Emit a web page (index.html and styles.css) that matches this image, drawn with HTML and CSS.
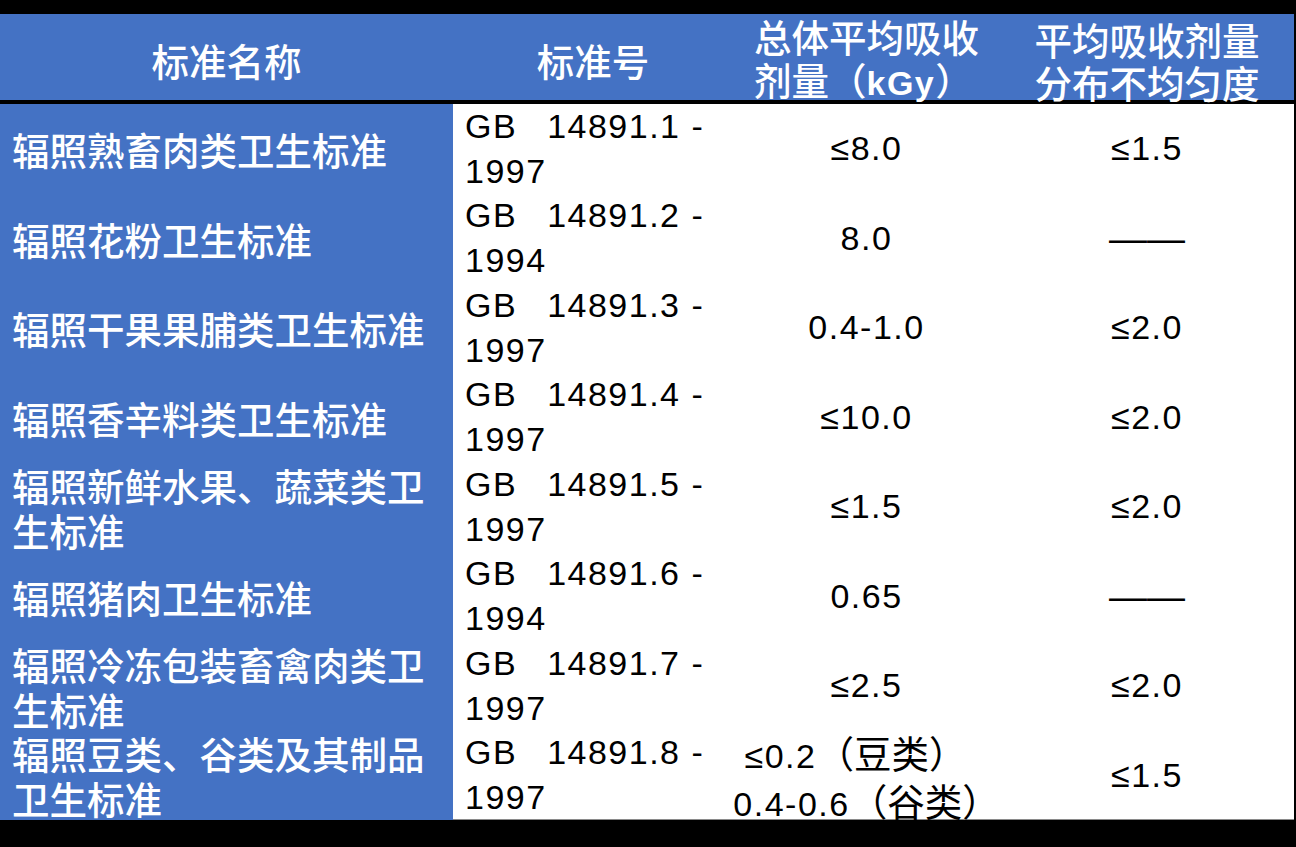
FILE: index.html
```html
<!DOCTYPE html>
<html lang="zh-CN">
<head>
<meta charset="utf-8">
<title>辐照食品卫生标准</title>
<link rel="stylesheet" href="styles.css">
</head>
<body>
<div class="sheet">
  <div class="grid head">
    <div class="cell hc center"><div>标准名称</div></div>
    <div class="cell hc center"><div>标准号</div></div>
    <div class="cell hc center"><div class="left">总体平均吸收<br>剂量（<span class="lat">kGy</span>）</div></div>
    <div class="cell hc center"><div class="left">平均吸收剂量<br>分布不均匀度</div></div>
  </div>
  <div class="grid body">
    <div class="cell name">辐照熟畜肉类卫生标准</div>
    <div class="cell code"><span class="lat">GB<span class="gap"></span>14891.1 -<br>1997</span></div>
    <div class="cell center"><span class="lat">≤8.0</span></div>
    <div class="cell center"><span class="lat">≤1.5</span></div>

    <div class="cell name">辐照花粉卫生标准</div>
    <div class="cell code"><span class="lat">GB<span class="gap"></span>14891.2 -<br>1994</span></div>
    <div class="cell center"><span class="lat">8.0</span></div>
    <div class="cell center"><span class="dash">——</span></div>

    <div class="cell name">辐照干果果脯类卫生标准</div>
    <div class="cell code"><span class="lat">GB<span class="gap"></span>14891.3 -<br>1997</span></div>
    <div class="cell center"><span class="lat">0.4-1.0</span></div>
    <div class="cell center"><span class="lat">≤2.0</span></div>

    <div class="cell name">辐照香辛料类卫生标准</div>
    <div class="cell code"><span class="lat">GB<span class="gap"></span>14891.4 -<br>1997</span></div>
    <div class="cell center"><span class="lat">≤10.0</span></div>
    <div class="cell center"><span class="lat">≤2.0</span></div>

    <div class="cell name">辐照新鲜水果、蔬菜类卫生标准</div>
    <div class="cell code"><span class="lat">GB<span class="gap"></span>14891.5 -<br>1997</span></div>
    <div class="cell center"><span class="lat">≤1.5</span></div>
    <div class="cell center"><span class="lat">≤2.0</span></div>

    <div class="cell name">辐照猪肉卫生标准</div>
    <div class="cell code"><span class="lat">GB<span class="gap"></span>14891.6 -<br>1994</span></div>
    <div class="cell center"><span class="lat">0.65</span></div>
    <div class="cell center"><span class="dash">——</span></div>

    <div class="cell name">辐照冷冻包装畜禽肉类卫生标准</div>
    <div class="cell code"><span class="lat">GB<span class="gap"></span>14891.7 -<br>1997</span></div>
    <div class="cell center"><span class="lat">≤2.5</span></div>
    <div class="cell center"><span class="lat">≤2.0</span></div>

    <div class="cell name">辐照豆类、谷类及其制品卫生标准</div>
    <div class="cell code"><span class="lat">GB<span class="gap"></span>14891.8 -<br>1997</span></div>
    <div class="cell center"><div class="mixed"><span class="lat">≤0.2</span>（豆类）<span class="tail"></span><br><span class="lat">0.4-0.6</span>（谷类）</div></div>
    <div class="cell center"><span class="lat">≤1.5</span></div>
  </div>
</div>
</body>
</html>
```

FILE: styles.css
```css
html, body {
  margin: 0;
  padding: 0;
  background: #000;
}

body {
  width: 1296px;
  height: 847px;
  overflow: hidden;
  font-family: "Noto Sans CJK SC", "Liberation Sans", sans-serif;
  font-size: 37.5px;
}

.sheet {
  padding-top: 14px;
  width: 1294px;
}

.grid {
  display: grid;
  grid-template-columns: 453px 280px 267px 294px;
}

.head {
  height: 86px;
  background: #4472c4;
  color: #fff;
  font-weight: 500;
  line-height: 43px;
  margin-bottom: 4px;
}

.body {
  grid-auto-rows: 89.5px;
  background: #fff;
  color: #000;
  line-height: 45px;
  border-bottom: 1px solid #8a8a8a;
  height: 716px;
  box-sizing: border-box;
}

.cell {
  display: flex;
  align-items: center;
  overflow: visible;
}

.center {
  justify-content: center;
  text-align: center;
}

.left {
  text-align: left;
}

.name {
  background: #4472c4;
  color: #fff;
  font-weight: 500;
  padding: 0 14px 0 12px;
}

.code {
  padding-left: 12px;
}

.lat {
  font-family: "Liberation Sans", Arial, sans-serif;
  font-size: 34px;
  letter-spacing: 1.5px;
}

.head .lat {
  font-weight: 700;
}

.gap {
  display: inline-block;
  width: 30px;
}

.dash {
  font-family: "Liberation Sans", Arial, sans-serif;
  font-size: 38px;
  letter-spacing: 0;
  position: relative;
  top: 1px;
}

.mixed {
  line-height: 43px;
  padding-top: 6px;
}

.tail {
  display: inline-block;
  width: 22px;
}
```
